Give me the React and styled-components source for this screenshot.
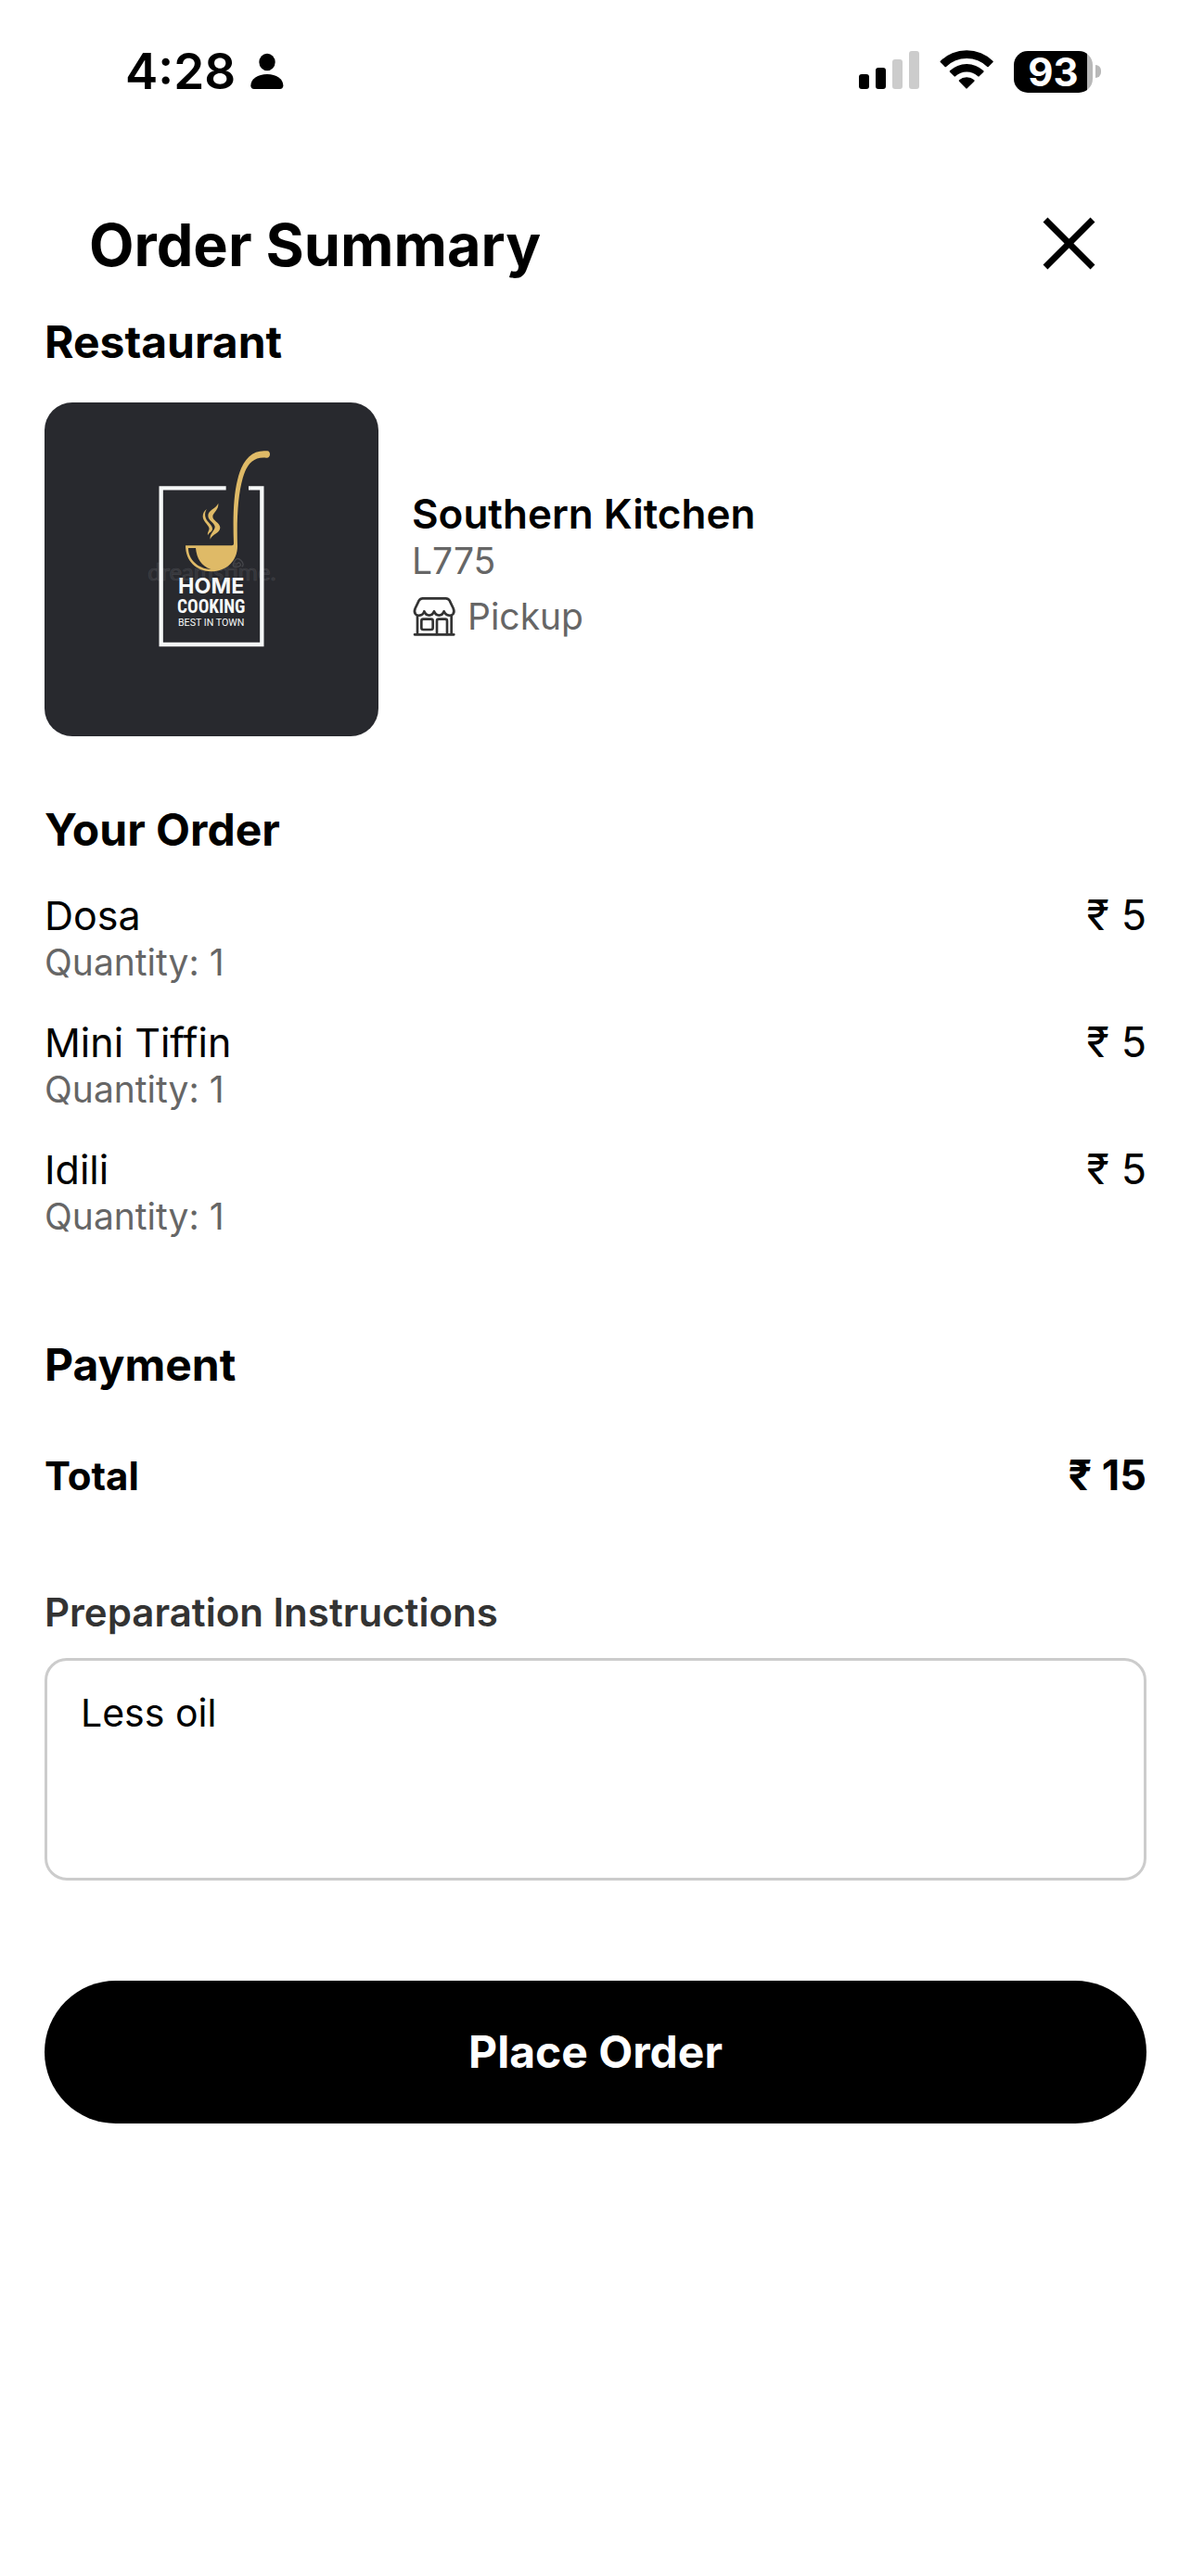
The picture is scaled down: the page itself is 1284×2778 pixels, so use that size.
import React, { useState } from "react";
import styled, { createGlobalStyle } from "styled-components";

const GlobalStyle = createGlobalStyle`
  *, *::before, *::after { box-sizing: border-box; }
  body {
    margin: 0;
    background: #fff;
    color: #000;
    font-family: Inter, "Noto Sans", sans-serif;
  }
  h1, h2, p, ul { margin: 0; padding: 0; }
`;

const Screen = styled.div`
  min-height: 100vh;
  display: flex;
  flex-direction: column;
`;

const StatusBar = styled.div`
  display: flex;
  justify-content: space-between;
  align-items: center;
  padding: 47px 97px 43px 135px;
`;

const StatusGroup = styled.div`
  display: flex;
  align-items: center;
  gap: ${(p) => p.$gap}px;
`;

const Clock = styled.span`
  font-size: 53px;
  line-height: 60px;
  font-weight: 600;
`;

const Glyph = styled.svg`
  display: block;
  flex: none;
  width: ${(p) => p.$w}px;
  height: ${(p) => p.$h}px;
`;

const Battery = styled.div`
  display: flex;
  align-items: center;
  gap: 3px;
  &::after {
    content: "";
    width: 6px;
    height: 14px;
    border-radius: 0 6px 6px 0;
    background: #b8b8b8;
  }
`;

const BatteryLevel = styled.span`
  width: 85px;
  height: 45px;
  border-radius: 15px;
  background: linear-gradient(to right, #000 79px, #b8b8b8 79px);
  color: #fff;
  font-size: 42px;
  line-height: 45px;
  font-weight: 700;
  text-align: center;
`;

const Header = styled.header`
  display: flex;
  justify-content: space-between;
  align-items: center;
  padding: 74px 100px 35px 96px;
`;

const Title = styled.h1`
  font-size: 63px;
  line-height: 80px;
  font-weight: 700;
`;

const CloseButton = styled.button`
  display: flex;
  padding: 0;
  border: 0;
  background: none;
  color: #000;
  cursor: pointer;
`;

const Content = styled.main`
  display: flex;
  flex-direction: column;
  padding: 0 48px;
`;

const Section = styled.section`
  display: flex;
  flex-direction: column;
  gap: ${(p) => p.$gap}px;
  margin-bottom: ${(p) => p.$after}px;
`;

const SectionTitle = styled.h2`
  font-size: 48px;
  line-height: 60px;
  font-weight: 700;
`;

const RestaurantRow = styled.div`
  display: flex;
  align-items: center;
  gap: 36px;
`;

const LogoTile = styled.svg`
  display: block;
  flex: none;
  width: 360px;
  height: 360px;
  border-radius: 30px;
  background: #28292e;
`;

const RestaurantInfo = styled.div`
  padding-bottom: 10px;
`;

const RestaurantName = styled.p`
  font-size: 44px;
  line-height: 52px;
  font-weight: 600;
`;

const Muted = styled.p`
  color: #666;
  font-size: 39px;
  line-height: 50px;
`;

const PickupRow = styled.div`
  display: flex;
  align-items: center;
  gap: 12px;
  margin-top: 10px;
`;

const OrderList = styled.ul`
  display: flex;
  flex-direction: column;
  gap: 35px;
  list-style: none;
`;

const OrderItem = styled.li`
  display: flex;
  justify-content: space-between;
  align-items: flex-start;
`;

const ItemName = styled.p`
  font-size: 43px;
  line-height: 52px;
`;

const Price = styled.span`
  font-size: 45px;
  line-height: 52px;
`;

const TotalRow = styled.div`
  display: flex;
  justify-content: space-between;
  align-items: baseline;
  font-size: 42px;
  line-height: 52px;
  font-weight: 700;
`;

const FieldLabel = styled.label`
  color: #333;
  font-size: 42px;
  line-height: 52px;
  font-weight: 600;
`;

const Instructions = styled.textarea`
  display: block;
  width: 100%;
  height: 240px;
  padding: 30px 36px;
  border: 3px solid #ccc;
  border-radius: 24px;
  background: #fff;
  color: #000;
  font: inherit;
  font-size: 41px;
  line-height: 52px;
  resize: none;
  outline: none;
`;

const PrimaryButton = styled.button`
  width: 100%;
  padding: 47px;
  border: 0;
  border-radius: 77px;
  background: #000;
  color: #fff;
  font: inherit;
  font-size: 48px;
  line-height: 60px;
  font-weight: 700;
  cursor: pointer;
`;

function PersonIcon() {
  return (
    <Glyph $w={36} $h={60} viewBox="506 51 108 180" aria-hidden="true">
      <ellipse cx="560" cy="111" rx="26" ry="28" />
      <path d="M507 187C507 165 530 150 560 150S612 165 612 187Q612 198 601 198H518Q507 198 507 187Z" />
    </Glyph>
  );
}

function SignalIcon() {
  return (
    <Glyph $w={65} $h={60} viewBox="75 51 195 180" aria-hidden="true">
      <rect x="75" y="150" width="33" height="48" rx="9" />
      <rect x="129" y="129" width="33" height="69" rx="9" />
      <rect x="183" y="102" width="33" height="96" rx="9" fill="#ccc" />
      <rect x="237" y="75" width="33" height="123" rx="9" fill="#ccc" />
    </Glyph>
  );
}

function WifiIcon() {
  return (
    <Glyph $w={58} $h={60} viewBox="337 51 174 180" aria-hidden="true">
      <path d="M339 108A122 122 0 0 1 510 108Q511 110 509 112L495 126Q493 128 491 126A95 95 0 0 0 358 126Q356 128 354 126L340 112Q338 110 339 108Z" />
      <path d="M370 139A79 79 0 0 1 479 139Q481 141 479 143L465 157Q463 159 461 157A54 54 0 0 0 388 157Q386 159 384 157L370 143Q368 141 370 139Z" />
      <path d="M400 169A37 37 0 0 1 449 169Q451 171 449 173L426 196Q424 198 422 196L400 173Q398 171 400 169Z" />
    </Glyph>
  );
}

function CloseIcon() {
  return (
    <Glyph $w={60} $h={60} viewBox="0 0 60 60" aria-hidden="true">
      <path d="M3 3L54 54M54 3L3 54" fill="none" stroke="currentColor" strokeWidth="7" />
    </Glyph>
  );
}

function StoreIcon() {
  return (
    <Glyph $w={48} $h={48} viewBox="42 363 144 144" aria-hidden="true">
      <g fill="none" stroke="#333" strokeWidth="8" strokeLinecap="round" strokeLinejoin="round">
        <path d="M77 376H152Q160 376 164 383L176 408Q181 420 175 427Q170 432 162 431Q151 430 146 418Q141 431 130 431T114 418Q109 431 98 431T82 418Q78 430 67 431Q59 432 54 427Q48 420 53 408L65 383Q69 376 77 376Z" />
        <path d="M60 433V492M170 433V492M51 493H178" />
        <rect x="73" y="443" width="37" height="34" rx="6" />
        <path d="M123 492V449Q123 443 129 443H150Q156 443 156 449V492" />
      </g>
    </Glyph>
  );
}

function RestaurantLogo() {
  return (
    <LogoTile viewBox="24 27 1080 1080" role="img" aria-label="Home Cooking, best in town">
      <text
        x="358"
        y="604"
        fontFamily="Lato, sans-serif"
        fontSize="77"
        fill="#34353a"
        stroke="#414247"
        strokeWidth="2"
      >
        dreamstime.
      </text>
      <path
        d="M648 549Q652 541 657 549T645 559T637 543T659 538T662 559"
        fill="none"
        stroke="#45464b"
        strokeWidth="4"
      />
      <path d="M611 304H401V810H727V304H684" fill="none" stroke="#f6f8f8" strokeWidth="13" />
      <g fill="#dfba67">
        <path d="M743 184C750 183 753 189 753 195S749 207 741 206C700 202 678 226 665 272C650 326 645 400 648 492C648 540 611 574 563 574S480 540 480 490H630Q636 490 636 484C633 400 635 330 648 278C662 215 694 179 743 184Z" />
        <path d="M586 353C588 375 569 383 568 395C567 410 592 415 592 432C592 450 565 453 560 470C556 452 577 440 575 428C572 415 553 410 553 393C553 374 579 371 586 353Z" />
        <path d="M549 372C540 385 543 398 549 408C556 418 567 425 567 436C567 446 556 448 552 457C550 446 559 440 556 432C551 420 537 412 536 396C536 385 541 378 549 372Z" />
      </g>
      <path d="M489 498H513C516 532 532 557 562 567C520 565 489 535 489 498Z" fill="#28292e" />
      <g fill="#f6f8f8" textAnchor="middle">
        <text x="563" y="646" fontFamily="Inter, sans-serif" fontSize="70" fontWeight="700">
          HOME
        </text>
        <text
          x="563"
          y="709"
          fontFamily='"Roboto Condensed", "Open Sans Condensed", "Liberation Sans Narrow", Roboto, sans-serif'
          fontSize="58"
          fontWeight="700"
        >
          COOKING
        </text>
        <text x="563" y="751" fontFamily="Roboto, sans-serif" fontSize="32">
          BEST IN TOWN
        </text>
      </g>
    </LogoTile>
  );
}

const items = [
  { name: "Dosa", quantity: 1, price: 5 },
  { name: "Mini Tiffin", quantity: 1, price: 5 },
  { name: "Idili", quantity: 1, price: 5 },
];

export default function App() {
  const [note, setNote] = useState("Less oil");
  const total = items.reduce((sum, item) => sum + item.price * item.quantity, 0);

  return (
    <Screen>
      <GlobalStyle />
      <StatusBar>
        <StatusGroup $gap={16}>
          <Clock>4:28</Clock>
          <PersonIcon />
        </StatusGroup>
        <StatusGroup $gap={22}>
          <SignalIcon />
          <WifiIcon />
          <Battery>
            <BatteryLevel>93</BatteryLevel>
          </Battery>
        </StatusGroup>
      </StatusBar>

      <Header>
        <Title>Order Summary</Title>
        <CloseButton type="button" aria-label="Close">
          <CloseIcon />
        </CloseButton>
      </Header>

      <Content>
        <Section $gap={35} $after={71}>
          <SectionTitle>Restaurant</SectionTitle>
          <RestaurantRow>
            <RestaurantLogo />
            <RestaurantInfo>
              <RestaurantName>Southern Kitchen</RestaurantName>
              <Muted>L775</Muted>
              <PickupRow>
                <StoreIcon />
                <Muted>Pickup</Muted>
              </PickupRow>
            </RestaurantInfo>
          </RestaurantRow>
        </Section>

        <Section $gap={36} $after={105}>
          <SectionTitle>Your Order</SectionTitle>
          <OrderList>
            {items.map((item) => (
              <OrderItem key={item.name}>
                <div>
                  <ItemName>{item.name}</ItemName>
                  <Muted>Quantity: {item.quantity}</Muted>
                </div>
                <Price>₹ {item.price}</Price>
              </OrderItem>
            ))}
          </OrderList>
        </Section>

        <Section $gap={63} $after={95}>
          <SectionTitle>Payment</SectionTitle>
          <TotalRow>
            <span>Total</span>
            <Price>₹ {total}</Price>
          </TotalRow>
        </Section>

        <Section $gap={23} $after={108}>
          <FieldLabel htmlFor="instructions">Preparation Instructions</FieldLabel>
          <Instructions
            id="instructions"
            value={note}
            onChange={(event) => setNote(event.target.value)}
          />
        </Section>

        <PrimaryButton type="button">Place Order</PrimaryButton>
      </Content>
    </Screen>
  );
}
